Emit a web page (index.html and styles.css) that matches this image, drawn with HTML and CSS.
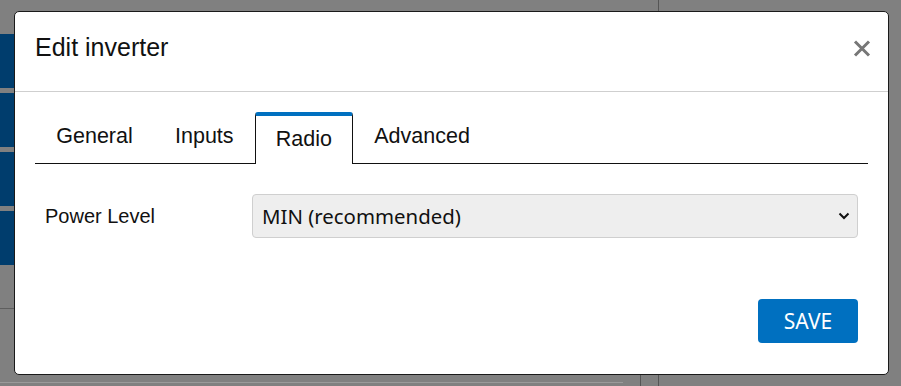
FILE: index.html
```html
<!DOCTYPE html>
<html lang="en">
<head>
    <meta charset="UTF-8">
    <meta name="viewport" content="width=device-width, initial-scale=1">
    <title>Edit inverter</title>
    <link rel="stylesheet" href="styles.css">
</head>
<body>

<div class="page">
    <div class="left">
        <div class="side">
            <div class="block"></div>
            <div class="block"></div>
            <div class="block"></div>
            <div class="block"></div>
        </div>
        <div class="rule"></div>
        <div class="rule bottom"></div>
    </div>
    <div class="mid"><div class="mid-foot"></div></div>
</div>

<div class="modal">
    <div class="modal-header">
        <h1 class="modal-title">Edit inverter</h1>
        <span class="close" title="Close">
            <svg width="18" height="17" viewBox="0 0 18 17"><path d="M2 1.5 L16 15.5 M16 1.5 L2 15.5" stroke="#777" stroke-width="3" fill="none"/></svg>
        </span>
    </div>
    <div class="modal-body">
        <ul class="tabs">
            <li class="tab">General</li>
            <li class="tab">Inputs</li>
            <li class="tab active">Radio</li>
            <li class="tab">Advanced</li>
        </ul>
        <div class="form-row">
            <label class="label" for="power">Power Level</label>
            <div class="select">
                <span id="power">MIN (recommended)</span>
                <svg width="12" height="8" viewBox="0 0 12 8"><path d="M1.5 1.5 L6 6 L10.5 1.5" stroke="#111" stroke-width="2" fill="none"/></svg>
            </div>
        </div>
        <div class="footer">
            <button class="save">SAVE</button>
        </div>
    </div>
</div>

</body>
</html>
```

FILE: styles.css
```css
body { margin: 0; background: #808080; font-family: "Liberation Sans", Arial, sans-serif; overflow: hidden; }

.page { display: flex; height: 386px; }
.left { width: 640px; display: flex; flex-direction: column; }
.side { display: flex; flex-direction: column; gap: 5px; padding-top: 34px; }
.block { width: 40px; height: 54px; background: #003d6d; }
.rule { height: 1px; background: #5e5e5e; margin-top: 43px; width: 40px; }
.rule.bottom { margin-top: 73px; width: 623px; background: #9a9a9a; }
.mid { width: 18px; border-right: 1px solid #555; display: flex; flex-direction: column; justify-content: flex-end; }
.mid-foot { height: 11px; border-left: 1px solid #555; }

.modal { position: absolute; top: 11px; left: 14px; width: 873px; height: 362px; background: #fff; border: 1px solid #1a1a1a; border-radius: 5px; }

.modal-header { height: 79px; border-bottom: 1px solid #cfcfcf; display: flex; justify-content: space-between; align-items: flex-start; padding: 0 17px 0 20px; }
.modal-title { margin: 20px 0 0; font-size: 25px; line-height: 30px; font-weight: normal; color: #111; }
.close { margin-top: 28px; display: block; height: 17px; }
.close svg { display: block; }

.modal-body { padding: 20px 20px 0; }

.tabs { list-style: none; margin: 0; padding: 0; display: flex; border-bottom: 1px solid #111; height: 51px; }
.tab { font-size: 21.5px; line-height: 25px; color: #111; padding: 8px 20px 14px 20.25px; border: 1px solid transparent; border-top: 4px solid transparent; border-bottom: none; }
.tab.active { padding: 11px 20px 12px 20.25px; border-color: #111; border-top-color: #0070c0; border-radius: 3px 3px 0 0; background: #fff; margin-bottom: -1px; }

.form-row { display: grid; grid-template-columns: 197px 1fr; gap: 10px; padding: 30px 10px 0; align-items: center; }
.label { font-size: 20px; color: #111; }
.select { height: 42px; border: 1px solid #cfcfcf; border-radius: 4px; background: #eeeeee; display: flex; align-items: center; justify-content: space-between; padding: 0 7px 0 9px; font-family: "Noto Sans", sans-serif; font-size: 20.4px; color: #111; }

.footer { display: flex; justify-content: flex-end; padding: 61px 10px 0; }
.save { width: 100px; height: 44px; border: none; border-radius: 4px; background: #0070c0; color: #fff; font-family: "Noto Sans", sans-serif; font-size: 21px; padding: 0; }
```
